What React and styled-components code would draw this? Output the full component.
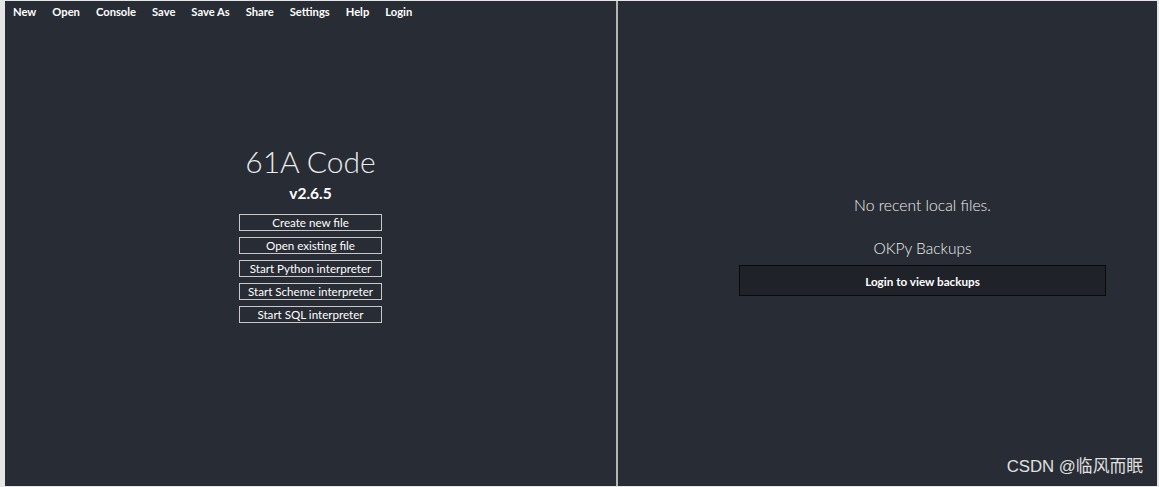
import styled, { createGlobalStyle } from "styled-components";

const GlobalStyle = createGlobalStyle`
  html, body {
    margin: 0;
    padding: 0;
    background: #f0f0f0;
  }
  * {
    box-sizing: border-box;
  }
`;

const Frame = styled.div`
  display: flex;
  height: 487px;
  padding: 1px 2px 1px 5px;
  background: #e6e6e6;
  font-family: Lato, "Noto Sans", sans-serif;
`;

const Panel = styled.section`
  display: flex;
  flex-direction: column;
  background: #282c34;
  color: #fff;
  width: ${({ width }) => width};
  flex: ${({ grow }) => (grow ? 1 : "none")};
  position: relative;
`;

const Divider = styled.div`
  width: 2px;
  background: #b5b5b5;
`;

const MenuBar = styled.nav`
  display: flex;
  gap: 16px;
  padding: 4px 0 0 8px;
  height: 24px;
`;

const MenuItem = styled.span`
  font-size: 11.2px;
  font-weight: 700;
  color: #fff;
`;

const Centered = styled.div`
  display: flex;
  flex-direction: column;
  align-items: center;
  padding-top: ${({ top }) => top}px;
  padding-left: ${({ left }) => left || 0}px;
`;

const Title = styled.h1`
  margin: 0;
  font-size: 30px;
  font-weight: 300;
  line-height: 40px;
  color: #eaeaea;
`;

const Version = styled.h2`
  margin: 2px 0 11px;
  font-size: 15.5px;
  font-weight: 700;
  line-height: 20px;
`;

const ButtonStack = styled.div`
  display: flex;
  flex-direction: column;
  gap: 6px;
  width: 143px;
`;

const OutlineButton = styled.button`
  height: 17px;
  padding: 0;
  background: transparent;
  border: 1px solid #c8c8c8;
  color: #fff;
  font-family: inherit;
  font-size: 11.6px;
  line-height: 14px;
  white-space: nowrap;
`;

const Note = styled.p`
  margin: ${({ gap }) => gap};
  font-size: ${({ size }) => size}px;
  font-weight: 300;
  line-height: 22px;
  color: #eee;
`;

const DarkButton = styled.button`
  width: 367px;
  height: 31px;
  background: #1f2228;
  border: 1px solid #0a0a0a;
  color: #fff;
  font-family: inherit;
  font-size: 11.7px;
  font-weight: 700;
`;

const Watermark = styled.span`
  position: absolute;
  right: 14px;
  bottom: 9px;
  font-family: "Liberation Sans", "Noto Sans CJK SC", sans-serif;
  font-size: 16.8px;
  color: #e0e0e0;
`;

const menu = ["New", "Open", "Console", "Save", "Save As", "Share", "Settings", "Help", "Login"];
const actions = [
  "Create new file",
  "Open existing file",
  "Start Python interpreter",
  "Start Scheme interpreter",
  "Start SQL interpreter",
];

export default function App() {
  return (
    <>
      <GlobalStyle />
      <Frame>
        <Panel width="611px">
          <MenuBar>
            {menu.map((m) => (
              <MenuItem key={m}>{m}</MenuItem>
            ))}
          </MenuBar>
          <Centered top={116}>
            <Title>61A Code</Title>
            <Version>v2.6.5</Version>
            <ButtonStack>
              {actions.map((a) => (
                <OutlineButton key={a}>{a}</OutlineButton>
              ))}
            </ButtonStack>
          </Centered>
        </Panel>
        <Divider />
        <Panel grow>
          <Centered top={193} left={70}>
            <Note gap="0 0 21px" size={15.7}>No recent local files.</Note>
            <Note gap="0 0 6px" size={15.5}>OKPy Backups</Note>
            <DarkButton>Login to view backups</DarkButton>
          </Centered>
          <Watermark>CSDN @临风而眠</Watermark>
        </Panel>
      </Frame>
    </>
  );
}
